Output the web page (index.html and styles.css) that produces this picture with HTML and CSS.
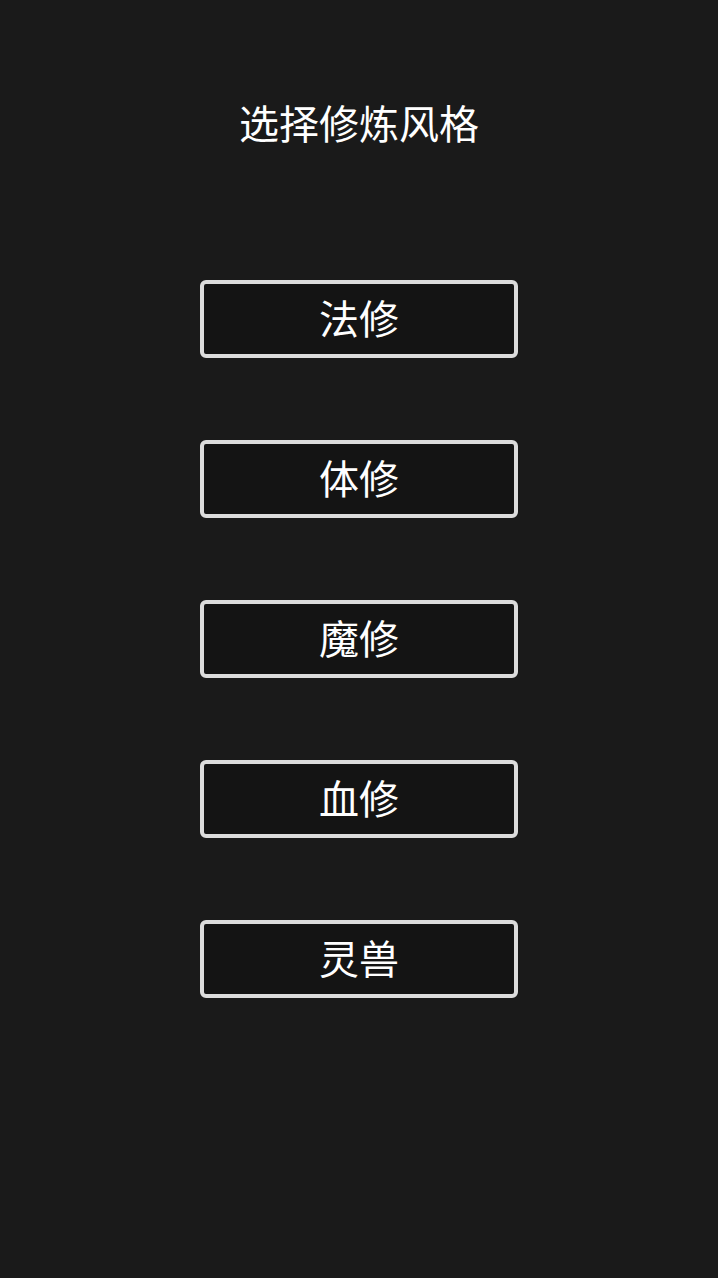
FILE: index.html
```html
<!DOCTYPE html>
<html lang="zh-CN">
<head>
    <meta charset="UTF-8">
    <meta name="viewport" content="width=device-width, initial-scale=1.0">
    <title>选择修炼风格</title>
    <link rel="stylesheet" href="styles.css">
</head>
<body>
    <h1 class="title">选择修炼风格</h1>

    <div class="style-list">
        <button class="style-btn">法修</button>
        <button class="style-btn">体修</button>
        <button class="style-btn">魔修</button>
        <button class="style-btn">血修</button>
        <button class="style-btn">灵兽</button>
    </div>
</body>
</html>
```

FILE: styles.css
```css
body {
    margin: 0;
    padding-top: 98px;
    min-height: 1278px;
    box-sizing: border-box;
    background: #1a1a1a;
    color: #fff;
    font-family: "Noto Sans CJK SC", "Noto Sans", sans-serif;
}
.title {
    margin: 0;
    font-size: 40px;
    font-weight: normal;
    line-height: 48px;
    text-align: center;
}
.style-list {
    display: flex;
    flex-direction: column;
    align-items: center;
    gap: 82px;
    margin-top: 134px;
}
.style-btn {
    width: 318px;
    height: 78px;
    box-sizing: border-box;
    background: #141414;
    color: #fff;
    border: 4px solid #dcdcdc;
    border-radius: 6px;
    font-family: inherit;
    font-size: 40px;
    line-height: 1;
    padding: 0 0 4px;
    cursor: pointer;
}
```
